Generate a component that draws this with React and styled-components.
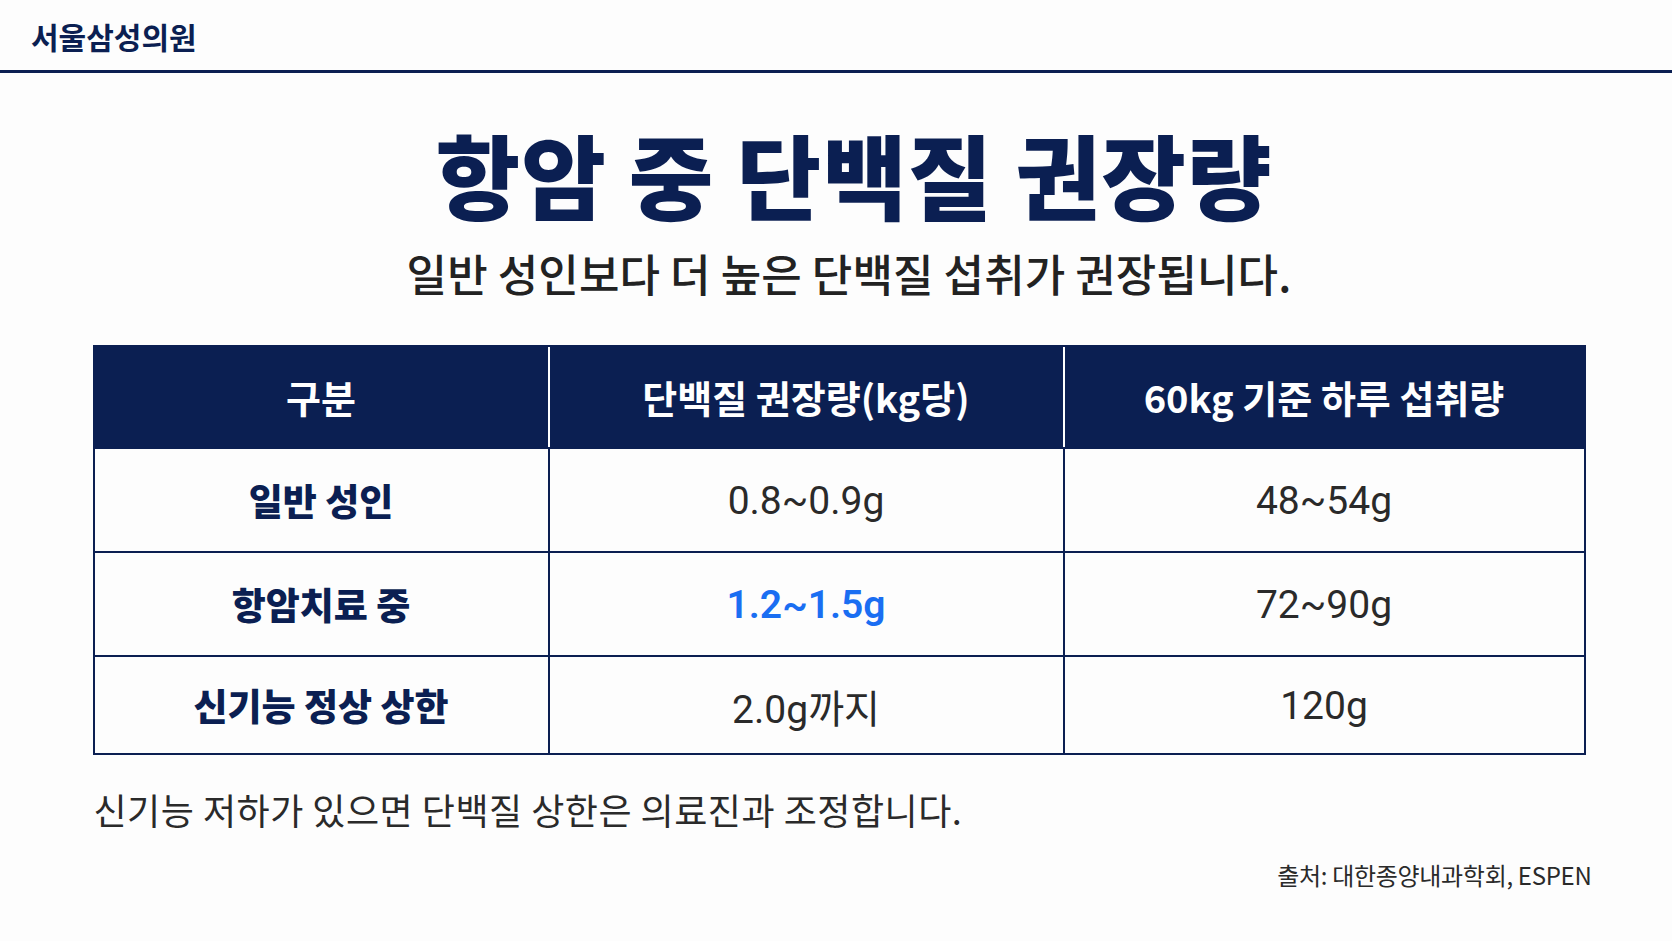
import React from 'react';
import styled, { createGlobalStyle } from 'styled-components';

const NAVY = '#0b1f52';

const GlobalStyle = createGlobalStyle`
  html, body {
    margin: 0;
    padding: 0;
    background: #fdfdfd;
  }
  body {
    font-family: "Noto Sans CJK KR", "Noto Sans", sans-serif;
    color: #222;
  }
`;

const Page = styled.div`
  width: 1672px;
  height: 941px;
  overflow: hidden;
  display: flex;
  flex-direction: column;
`;

const Header = styled.header`
  height: 73px;
  display: flex;
  align-items: center;
  padding-left: 31px;
  border-bottom: 3px solid ${NAVY};
  box-sizing: border-box;
`;

const Brand = styled.div`
  font-size: 30px;
  font-weight: 700;
  color: ${NAVY};
  margin-top: 2px;
`;

const Main = styled.main`
  display: flex;
  flex-direction: column;
  align-items: center;
  padding-left: 6px;
`;

const Title = styled.h1`
  margin: 45px 0 0;
  padding-left: 30px;
  font-size: 92px;
  font-weight: 900;
  line-height: 1.2;
  color: ${NAVY};
  letter-spacing: 1px;
`;

const Subtitle = styled.p`
  margin: 17px 0 0;
  padding-left: 20px;
  font-size: 44px;
  font-weight: 500;
  line-height: 1.3;
  color: #222;
  letter-spacing: 0.1px;
`;

const Table = styled.div`
  margin-top: 42px;
  width: 1493px;
  display: grid;
  grid-template-columns: 453px 515px 1fr;
  border: 2px solid ${NAVY};
  box-sizing: border-box;
`;

const HeadCell = styled.div`
  height: 100px;
  background: ${NAVY};
  color: #fff;
  font-size: 38px;
  font-weight: 700;
  display: flex;
  align-items: center;
  justify-content: center;
  border-left: ${p => (p.$first ? 'none' : '2px solid #fff')};
`;

const Cell = styled.div`
  height: ${p => p.$h}px;
  display: flex;
  align-items: center;
  justify-content: center;
  border-top: 2px solid ${NAVY};
  border-left: ${p => (p.$first ? 'none' : `2px solid ${NAVY}`)};
  box-sizing: border-box;
  font-size: ${p => (p.$label ? 37 : 39)}px;
  font-weight: ${p => (p.$label ? 900 : p.$accent ? 600 : 400)};
  color: ${p => (p.$label ? NAVY : p.$accent ? '#1a6ef2' : '#2a2a2a')};
  font-family: ${p => (p.$label ? '"Noto Sans CJK KR", sans-serif' : 'Roboto, "Noto Sans CJK KR", sans-serif')};
  padding-top: ${p => (p.$label ? 0 : 2)}px;
`;

const Note = styled.p`
  margin: 31px 0 0;
  width: 1493px;
  padding-left: 1px;
  box-sizing: border-box;
  font-size: 36px;
  font-weight: 400;
  color: #2a2a2a;
  line-height: 1.3;
  letter-spacing: 0.5px;
`;

const Source = styled.p`
  margin: 27px 0 0;
  width: 1505px;
  text-align: right;
  font-size: 24px;
  color: #2a2a2a;
  letter-spacing: -0.3px;
  line-height: 1.3;
`;

const heads = ['구분', '단백질 권장량(kg당)', '60kg 기준 하루 섭취량'];

const rows = [
  { label: '일반 성인', perKg: '0.8~0.9g', daily: '48~54g', h: 104 },
  { label: '항암치료 중', perKg: '1.2~1.5g', daily: '72~90g', h: 104, accent: true },
  { label: '신기능 정상 상한', perKg: '2.0g까지', daily: '120g', h: 98 },
];

export default function App() {
  return (
    <Page>
      <GlobalStyle />
      <Header>
        <Brand>서울삼성의원</Brand>
      </Header>
      <Main>
        <Title>항암 중 단백질 권장량</Title>
        <Subtitle>일반 성인보다 더 높은 단백질 섭취가 권장됩니다.</Subtitle>
        <Table>
          {heads.map((h, i) => (
            <HeadCell key={h} $first={i === 0}>{h}</HeadCell>
          ))}
          {rows.map(r => (
            <React.Fragment key={r.label}>
              <Cell $first $label $h={r.h}>{r.label}</Cell>
              <Cell $h={r.h} $accent={r.accent}>{r.perKg}</Cell>
              <Cell $h={r.h}>{r.daily}</Cell>
            </React.Fragment>
          ))}
        </Table>
        <Note>신기능 저하가 있으면 단백질 상한은 의료진과 조정합니다.</Note>
        <Source>출처: 대한종양내과학회, ESPEN</Source>
      </Main>
    </Page>
  );
}
